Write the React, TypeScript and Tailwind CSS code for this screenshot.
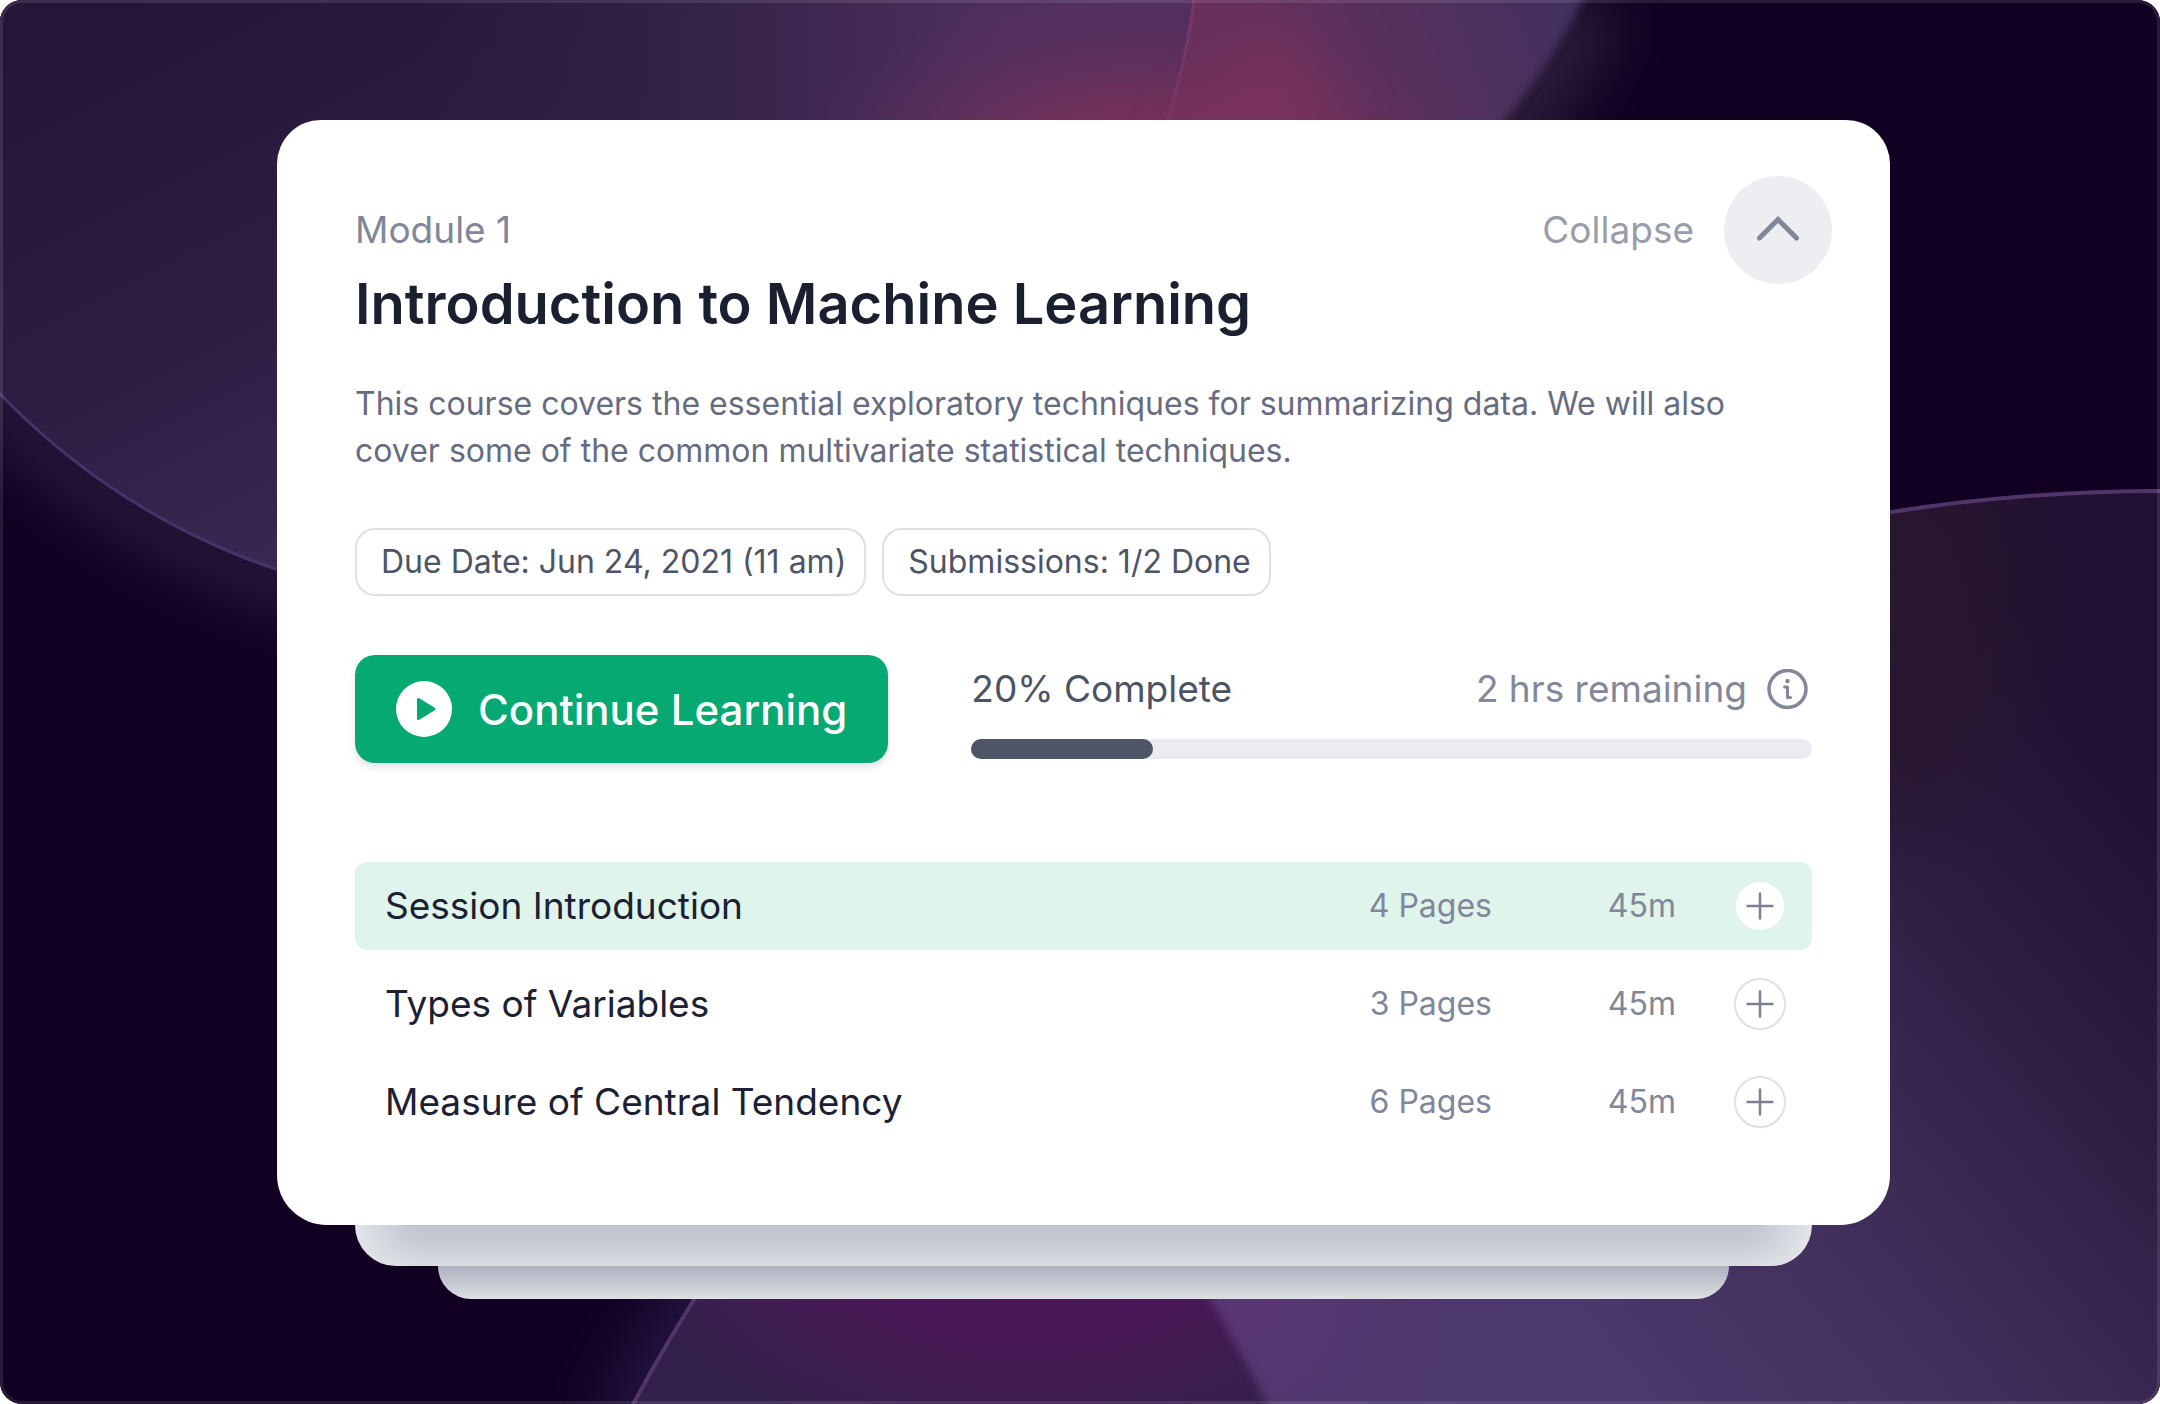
import React, { useState } from 'react';

interface Session {
  title: string;
  pages: number;
  duration: string;
  active?: boolean;
}

const SESSIONS: Session[] = [
  { title: 'Session Introduction', pages: 4, duration: '45m', active: true },
  { title: 'Types of Variables', pages: 3, duration: '45m' },
  { title: 'Measure of Central Tendency', pages: 6, duration: '45m' },
];

const PROGRESS = 20;

const Backdrop: React.FC = () => (
  <svg
    className="absolute inset-0 w-full h-full"
    viewBox="0 0 2160 1404"
    preserveAspectRatio="none"
    aria-hidden="true"
  >
    <defs>
      <linearGradient id="discTop" gradientUnits="userSpaceOnUse" x1="100" y1="0" x2="400" y2="600">
        <stop offset="0" stopColor="#251638" />
        <stop offset="0.5" stopColor="#2d1d42" />
        <stop offset="1" stopColor="#3f2b58" />
      </linearGradient>
      <linearGradient id="discTopFade" gradientUnits="userSpaceOnUse" x1="420" y1="0" x2="1000" y2="0">
        <stop offset="0" stopColor="#2e1e45" stopOpacity="0" />
        <stop offset="0.5" stopColor="#352349" />
        <stop offset="1" stopColor="#4f2f5e" />
      </linearGradient>
      <linearGradient id="discTopLine" gradientUnits="userSpaceOnUse" x1="0" y1="0" x2="1200" y2="0">
        <stop offset="0" stopColor="#46326a" />
        <stop offset="0.6" stopColor="#46326a" />
        <stop offset="1" stopColor="#763868" />
      </linearGradient>
      <linearGradient id="wedge" gradientUnits="userSpaceOnUse" x1="1250" y1="120" x2="1560" y2="0">
        <stop offset="0" stopColor="#6a305c" />
        <stop offset="0.5" stopColor="#56305d" />
        <stop offset="1" stopColor="#43305f" />
      </linearGradient>
      <radialGradient id="glow" gradientUnits="userSpaceOnUse" cx="0" cy="0" r="1" gradientTransform="translate(1150 190) scale(370 210)">
        <stop offset="0" stopColor="#82315a" />
        <stop offset="0.4" stopColor="#773159" stopOpacity="0.85" />
        <stop offset="1" stopColor="#5a2f60" stopOpacity="0" />
      </radialGradient>
      <linearGradient id="discBottom" gradientUnits="userSpaceOnUse" x1="2130" y1="740" x2="1520" y2="1250">
        <stop offset="0" stopColor="#201032" />
        <stop offset="0.3" stopColor="#2e1d42" />
        <stop offset="0.65" stopColor="#402e5a" />
        <stop offset="1" stopColor="#4b386c" />
      </linearGradient>
      <radialGradient id="ember" gradientUnits="userSpaceOnUse" cx="0" cy="0" r="1" gradientTransform="translate(1880 600) scale(200 300)">
        <stop offset="0" stopColor="#2a1730" />
        <stop offset="0.5" stopColor="#28162f" stopOpacity="0.85" />
        <stop offset="1" stopColor="#28162f" stopOpacity="0" />
      </radialGradient>
      <radialGradient id="magenta" gradientUnits="userSpaceOnUse" cx="0" cy="0" r="1" gradientTransform="translate(1030 1230) scale(400 230)">
        <stop offset="0" stopColor="#501858" />
        <stop offset="0.45" stopColor="#4a1856" />
        <stop offset="1" stopColor="#33204a" />
      </radialGradient>
      <radialGradient id="violet" gradientUnits="userSpaceOnUse" cx="1240" cy="1300" r="320">
        <stop offset="0" stopColor="#5b3674" />
        <stop offset="1" stopColor="#4b386c" stopOpacity="0" />
      </radialGradient>
      <clipPath id="bottomClip">
        <circle cx="2160" cy="2224" r="1733" />
      </clipPath>
      <filter id="soft" filterUnits="userSpaceOnUse" x="-200" y="-200" width="2560" height="1804" colorInterpolationFilters="sRGB">
        <feGaussianBlur stdDeviation="28" />
      </filter>
      <filter id="edge" filterUnits="userSpaceOnUse" x="-200" y="-200" width="2560" height="1804" colorInterpolationFilters="sRGB">
        <feGaussianBlur stdDeviation="4" />
      </filter>
    </defs>

    <rect width="2160" height="1404" fill="#120022" />

    <path d="M1585 0 Q1560 55 1460 190" fill="none" stroke="#2b1a38" strokeWidth="90" filter="url(#soft)" />
    <circle cx="502" cy="-91" r="706" fill="none" stroke="#28153a" strokeWidth="70" filter="url(#soft)" />
    <path d="M740 1220 L620 1434" fill="none" stroke="#231440" strokeWidth="70" filter="url(#soft)" />

    <path d="M1100 -20 H1592 Q1560 55 1482 150 H1100 Z" fill="url(#wedge)" filter="url(#edge)" />
    <circle cx="502" cy="-91" r="698" fill="url(#discTop)" />
    <path d="M420 0 H1194 Q1188 60 1168 120 L1160 150 H420 Z" fill="url(#discTopFade)" />
    <rect x="760" y="0" width="760" height="150" fill="url(#glow)" />
    <path d="M1278 10 L1350 150 H1180 Z" fill="#7c325b" fillOpacity="0.8" filter="url(#soft)" />
    <circle cx="502" cy="-91" r="698" fill="none" stroke="url(#discTopLine)" strokeWidth="3" />

    <g clipPath="url(#bottomClip)">
      <rect y="480" width="2160" height="924" fill="url(#discBottom)" />
      <rect x="1680" y="480" width="480" height="500" fill="url(#ember)" />
      <rect x="900" y="980" width="680" height="424" fill="url(#violet)" />
      <path d="M600 1200 H1150 Q1215 1300 1275 1420 H600 Z" fill="url(#magenta)" filter="url(#edge)" />
    </g>
    <circle cx="2160" cy="2224" r="1733" fill="none" stroke="#50346a" strokeWidth="4" />

    <rect width="2160" height="1404" rx="22" fill="none" stroke="#ffffff" strokeOpacity="0.1" strokeWidth="6" />
  </svg>
);

const PlusIcon: React.FC = () => (
  <svg className="w-7 h-7" viewBox="0 0 28 28" fill="none" stroke="#7b8192" strokeWidth="2.5" strokeLinecap="round" aria-hidden="true">
    <path d="M14 1.5v25M1.5 14h25" />
  </svg>
);

const Tag: React.FC<{ children: React.ReactNode }> = ({ children }) => (
  <span className="flex items-center h-[68px] pl-6 pr-[18px] rounded-[20px] border-2 border-[#dfdfe7]">
    {children}
  </span>
);

const SessionRow: React.FC<{ session: Session }> = ({ session }) => (
  <li
    className={`flex items-center h-[88px] pl-[30px] pr-[26px] rounded-xl ${
      session.active ? 'bg-[#dff4eb]' : ''
    }`}
  >
    <span className="flex-1 text-[37px] text-[#1b2033]">{session.title}</span>
    <span className="w-[130px] text-right whitespace-nowrap text-[32px] text-[#80879a]">{session.pages} Pages</span>
    <span className="w-[184px] text-right text-[32px] text-[#80879a]">{session.duration}</span>
    <button
      type="button"
      aria-label={`Expand ${session.title}`}
      className={`ml-[58px] flex items-center justify-center w-[52px] h-[52px] rounded-full bg-white border-2 ${
        session.active ? 'border-[#dff4eb]' : 'border-[#dfe0e7]'
      }`}
    >
      <PlusIcon />
    </button>
  </li>
);

const App: React.FC = () => {
  const [expanded, setExpanded] = useState(true);

  return (
    <main className="relative min-h-screen overflow-hidden rounded-[22px] bg-[#120022] pt-[120px] pb-[105px] pl-[277px] pr-[270px] font-['Inter','Liberation_Sans',sans-serif]">
      <Backdrop />

      <div className="relative">
        <article className="relative z-20 rounded-t-[44px] rounded-b-[50px] bg-white pt-14 pb-[79px] px-[78px]">
          <header>
            <div className="flex items-center justify-between h-[108px] -mr-5">
              <p className="text-[37px] text-[#808799]">Module 1</p>
              <button
                type="button"
                aria-expanded={expanded}
                onClick={() => setExpanded(!expanded)}
                className="flex items-center gap-[30px] text-[37px] text-[#989dab]"
              >
                Collapse
                <span className="flex items-center justify-center w-[108px] h-[108px] rounded-full bg-[#edeef2]">
                  <svg className="w-11 h-7" viewBox="0 0 44 28" fill="none" stroke="#7f8798" strokeWidth="5" strokeLinecap="round" aria-hidden="true">
                    <path d="M3.5 22 22 3.5 40.5 22" />
                  </svg>
                </span>
              </button>
            </div>
            <h1 className="-mt-3 text-[56px] leading-[64px] font-semibold text-[#1b2030]">
              Introduction to Machine Learning
            </h1>
          </header>

          <p className="mt-[44px] text-[32px] leading-[47px] text-[#666c80]">
            This course covers the essential exploratory techniques for summarizing data. We will also
            cover some of the common multivariate statistical techniques.
          </p>

          <div className="flex gap-4 mt-[54px] text-[32px] text-[#4d5466]">
            <Tag>Due Date: Jun 24, 2021 (11 am)</Tag>
            <Tag>Submissions: 1/2 Done</Tag>
          </div>

          <div className="flex items-start mt-[59px]">
            <button
              type="button"
              className="flex shrink-0 items-center h-[108px] gap-[26px] px-[41px] rounded-[20px] bg-[#05a971] text-white text-[42px] font-medium shadow-[0_5px_6px_rgba(40,50,80,0.12)]"
            >
              <svg className="w-14 h-14" viewBox="0 0 56 56" aria-hidden="true">
                <circle cx="28" cy="28" r="28" fill="#fff" />
                <path d="M22.5 18.5v19L38 28Z" fill="#05a971" stroke="#05a971" strokeWidth="3" strokeLinejoin="round" />
              </svg>
              Continue Learning
            </button>

            <div className="flex-1 ml-[83px] pt-2">
              <div className="flex items-center justify-between h-[52px] text-[37px]">
                <span id="module-progress-label" className="text-[#4b5365]">{PROGRESS}% Complete</span>
                <span className="flex items-center gap-5 mr-1 text-[#828899]">
                  2 hrs remaining
                  <svg className="w-[41px] h-[41px]" viewBox="0 0 41 41" fill="none" stroke="#828899" strokeWidth="3.5" aria-hidden="true">
                    <circle cx="20.5" cy="20" r="18.5" />
                    <path d="M17.5 18h3v10.5h3" strokeWidth="3" strokeLinecap="round" strokeLinejoin="round" />
                    <circle cx="20.5" cy="12" r="2.2" fill="#828899" stroke="none" />
                  </svg>
                </span>
              </div>
              <div
                role="progressbar"
                aria-valuenow={PROGRESS}
                aria-labelledby="module-progress-label"
                className="mt-6 h-5 rounded-full bg-[#ebecf1]"
              >
                <div className="w-[182px] h-5 rounded-full bg-[#4d5567]" />
              </div>
            </div>
          </div>

          <ul className="flex flex-col gap-[10px] mt-[99px]">
            {SESSIONS.map((session) => (
              <SessionRow key={session.title} session={session} />
            ))}
          </ul>
        </article>

        {/* Cards stacked underneath */}
        <div className="relative z-10 mx-[78px] h-[41px] overflow-hidden rounded-b-[44px] bg-[#e8eaed]">
          <div className="mx-[50px] h-px bg-[#b9bdca] shadow-[0_0_50px_24px_#aeb4c2]" />
        </div>
        <div className="relative mx-[161px] h-[33px] rounded-b-[36px] bg-linear-to-b from-[#acb1be] to-[#dde1e3]" />
      </div>
    </main>
  );
};

export default App;
